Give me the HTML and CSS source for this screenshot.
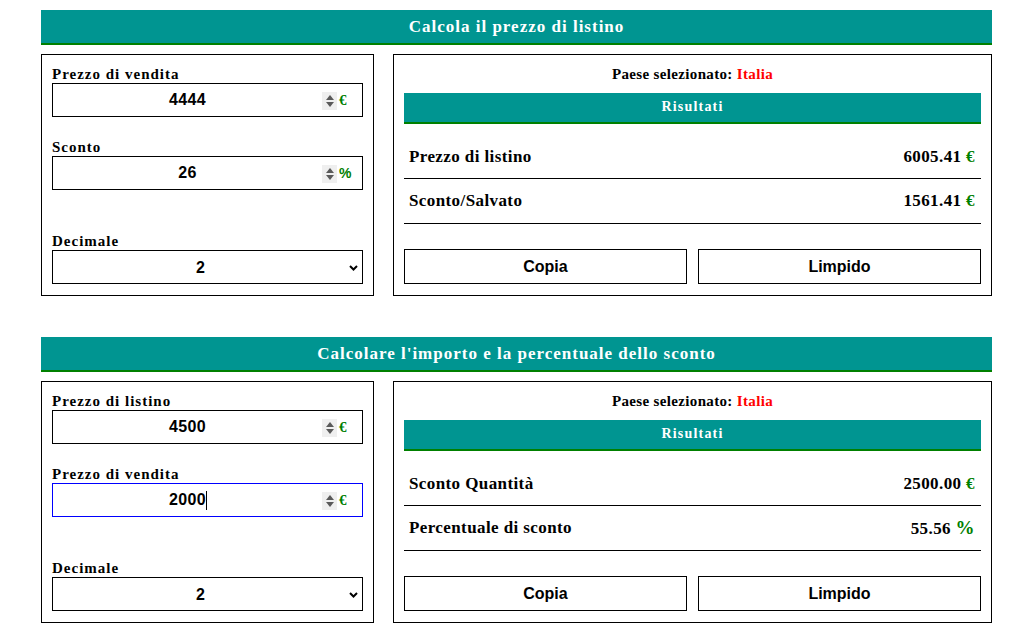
FILE: index.html
```html
<!DOCTYPE html>
<html lang="it">
<head>
<meta charset="utf-8">
<title>Calcola il prezzo di listino</title>
<link rel="stylesheet" href="styles.css">
</head>
<body>
<div class="page">
  <section class="calc">
    <h2 class="bar">Calcola il prezzo di listino</h2>
    <div class="calc-body">
      <div class="inputs">
        <label class="lbl">Prezzo di vendita</label>
        <div class="field">
          <input type="text" class="num" value="4444">
          <span class="spin"><i class="up"></i><i class="down"></i></span>
          <span class="suffix">€</span>
        </div>
        <label class="lbl lbl-gap">Sconto</label>
        <div class="field">
          <input type="text" class="num" value="26">
          <span class="spin"><i class="up"></i><i class="down"></i></span>
          <span class="suffix pct">%</span>
        </div>
        <label class="lbl lbl-gap-lg">Decimale</label>
        <div class="field">
          <select class="sel"><option>2</option></select>
          <svg class="chev" width="9" height="6" viewBox="0 0 9 6"><path d="M1 1 L4.5 4.5 L8 1" fill="none" stroke="#000" stroke-width="2"/></svg>
        </div>
      </div>
      <div class="results">
        <p class="country">Paese selezionato: <span class="red">Italia</span></p>
        <h3 class="subbar">Risultati</h3>
        <div class="rows">
          <div class="row"><span>Prezzo di listino</span><span>6005.41 <em class="cur">€</em></span></div>
          <div class="row"><span>Sconto/Salvato</span><span>1561.41 <em class="cur">€</em></span></div>
        </div>
        <div class="btns">
          <button class="btn">Copia</button>
          <button class="btn">Limpido</button>
        </div>
      </div>
    </div>
  </section>

  <section class="calc second">
    <h2 class="bar">Calcolare l'importo e la percentuale dello sconto</h2>
    <div class="calc-body">
      <div class="inputs">
        <label class="lbl">Prezzo di listino</label>
        <div class="field">
          <input type="text" class="num" value="4500">
          <span class="spin"><i class="up"></i><i class="down"></i></span>
          <span class="suffix">€</span>
        </div>
        <label class="lbl lbl-gap">Prezzo di vendita</label>
        <div class="field">
          <input type="text" class="num focused" value="2000">
          <span class="caret"></span>
          <span class="spin"><i class="up"></i><i class="down"></i></span>
          <span class="suffix">€</span>
        </div>
        <label class="lbl lbl-gap-lg">Decimale</label>
        <div class="field">
          <select class="sel"><option>2</option></select>
          <svg class="chev" width="9" height="6" viewBox="0 0 9 6"><path d="M1 1 L4.5 4.5 L8 1" fill="none" stroke="#000" stroke-width="2"/></svg>
        </div>
      </div>
      <div class="results">
        <p class="country">Paese selezionato: <span class="red">Italia</span></p>
        <h3 class="subbar">Risultati</h3>
        <div class="rows">
          <div class="row"><span>Sconto Quantità</span><span>2500.00 <em class="cur">€</em></span></div>
          <div class="row"><span>Percentuale di sconto</span><span>55.56 <em class="cur pct-big">%</em></span></div>
        </div>
        <div class="btns">
          <button class="btn">Copia</button>
          <button class="btn">Limpido</button>
        </div>
      </div>
    </div>
  </section>
</div>
</body>
</html>
```

FILE: styles.css
```css
* { box-sizing: border-box; }
body {
  margin: 0;
  background: #fff;
  font-family: "Liberation Serif", "Times New Roman", serif;
  color: #000;
}
.page {
  width: 951px;
  margin-left: 41px;
  padding-top: 10px;
}
.calc { display: flex; flex-direction: column; }
.second { margin-top: 41px; }
.bar {
  margin: 0;
  height: 35px;
  background: #009591;
  border-bottom: 2px solid #008000;
  color: #fff;
  font-size: 17px;
  font-weight: bold;
  letter-spacing: 1px;
  text-align: center;
  line-height: 33px;
}
.calc-body {
  display: flex;
  gap: 19px;
  margin-top: 9px;
}
.inputs {
  width: 333px;
  height: 242px;
  border: 1px solid #000;
  padding: 10px 10px 0 10px;
  display: flex;
  flex-direction: column;
}
.lbl {
  font-size: 15px;
  font-weight: bold;
  letter-spacing: 1px;
  line-height: 19px;
  height: 18px;
}
.lbl-gap { margin-top: 21px; }
.lbl-gap-lg { margin-top: 42px; }
.field {
  position: relative;
  width: 311px;
  height: 34px;
}
.num {
  width: 100%;
  height: 100%;
  border: 1px solid #000;
  border-radius: 0;
  padding: 0 40px 0 0;
  text-align: center;
  font-family: "Liberation Sans", Arial, sans-serif;
  font-weight: bold;
  font-size: 16px;
  letter-spacing: 0.3px;
  color: #000;
  outline: none;
  background: #fff;
}
.num.focused { border-color: #0000ff; }
.caret {
  position: absolute;
  left: 154px;
  top: 8px;
  width: 1px;
  height: 19px;
  background: #000;
}
.spin {
  position: absolute;
  left: 270px;
  top: 9px;
  width: 15px;
  height: 18px;
  background: #efefef;
  display: flex;
  flex-direction: column;
  align-items: center;
  justify-content: center;
  gap: 2px;
}
.spin i {
  display: block;
  width: 0;
  height: 0;
  border-left: 4px solid transparent;
  border-right: 4px solid transparent;
}
.spin .up { border-bottom: 5px solid #5a5a5a; }
.spin .down { border-top: 5px solid #5a5a5a; }
.suffix {
  position: absolute;
  left: 287px;
  top: 8px;
  color: #008000;
  font-weight: bold;
  font-size: 15px;
  line-height: 18px;
}
.suffix.pct { font-size: 14px; font-family: "Liberation Sans", Arial, sans-serif; }
.sel {
  appearance: none;
  -webkit-appearance: none;
  width: 100%;
  height: 100%;
  border: 1px solid #000;
  border-radius: 0;
  background: #fff;
  padding: 0 14px 0 0;
  text-align: center;
  text-align-last: center;
  font-family: "Liberation Sans", Arial, sans-serif;
  font-weight: bold;
  font-size: 16px;
  color: #000;
}
.chev {
  position: absolute;
  right: 5px;
  top: 15px;
  pointer-events: none;
}
.results {
  flex: 1;
  height: 242px;
  border: 1px solid #000;
  padding: 0 10px;
  display: flex;
  flex-direction: column;
}
.country {
  margin: 0;
  height: 38px;
  line-height: 18px;
  padding-top: 10px;
  text-align: center;
  font-size: 15px;
  font-weight: bold;
  letter-spacing: 0.35px;
}
.red { color: #ff0000; }
.subbar {
  margin: 0;
  height: 31px;
  background: #009591;
  border-bottom: 2px solid #008000;
  color: #fff;
  font-size: 14px;
  font-weight: bold;
  letter-spacing: 1.2px;
  text-align: center;
  line-height: 28px;
}
.rows { margin-top: 10px; }
.row {
  height: 45px;
  display: flex;
  justify-content: space-between;
  align-items: center;
  padding: 0 6px 0 5px;
  border-bottom: 1px solid #000;
  font-size: 17px;
  font-weight: bold;
  letter-spacing: 0.4px;
}
.row:first-child { padding-top: 2px; }
.cur {
  font-style: normal;
  color: #008000;
}
.pct-big { font-size: 19px; }
.btns {
  display: flex;
  gap: 11px;
  margin-top: 25px;
}
.btn {
  flex: 1;
  height: 35px;
  border: 1px solid #000;
  border-radius: 0;
  background: #fff;
  font-family: "Liberation Sans", Arial, sans-serif;
  font-weight: bold;
  font-size: 16px;
  color: #000;
  padding: 0;
}
```
